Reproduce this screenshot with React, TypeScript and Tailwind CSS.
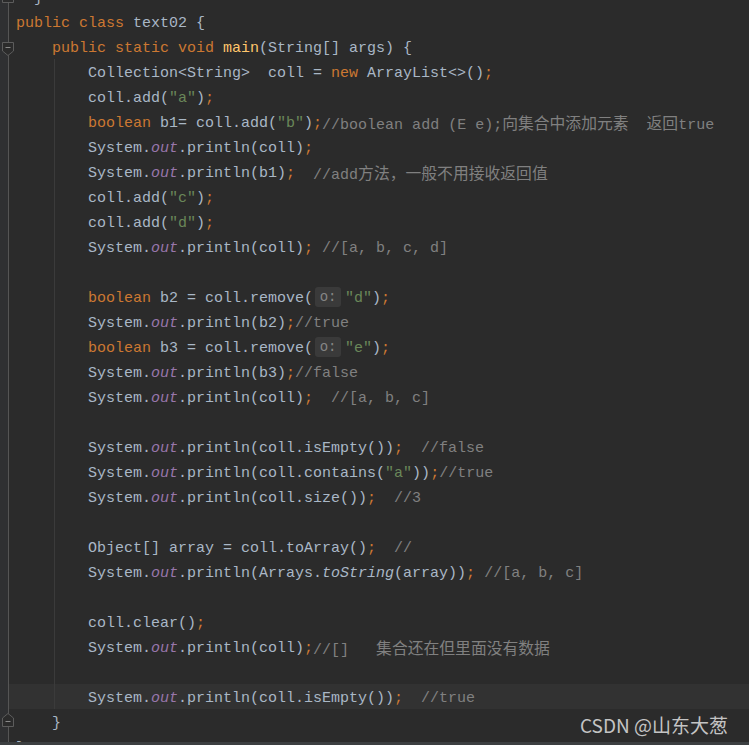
import type { ReactNode } from "react";

type Tok = [string, string];

const K = "text-[#cc7832]";
const T = "text-[#a9b7c6]";
const S = "text-[#6a8759]";
const C = "text-[#808080]";
const O = "text-[#9876aa] italic";
const M = "text-[#ffc66d]";
const I = "text-[#a9b7c6] italic";
const HINT = "hint";

const IND = "        ";

// System.out.<rest>
const sys = (rest: string, comment?: string): Tok[] => {
  const toks: Tok[] = [
    [IND + "System.", T],
    ["out", O],
    [".println(" + rest + ")", T],
    [";", K],
  ];
  if (comment) toks.push([comment, C]);
  return toks;
};

const lines: Tok[][] = [
  [["  }", T]],
  [["public class ", K], ["text02 {", T]],
  [["    public static void ", K], ["main", M], ["(String[] args) {", T]],
  [[IND + "Collection<String>  coll = ", T], ["new ", K], ["ArrayList<>()", T], [";", K]],
  [[IND + "coll.add(", T], ['"a"', S], [")", T], [";", K]],
  [
    [IND + "boolean ", K],
    ["b1= coll.add(", T],
    ['"b"', S],
    [")", T],
    [";", K],
    ["//boolean add (E e);向集合中添加元素  返回true", C],
  ],
  sys("coll"),
  sys("b1", "  //add方法，一般不用接收返回值"),
  [[IND + "coll.add(", T], ['"c"', S], [")", T], [";", K]],
  [[IND + "coll.add(", T], ['"d"', S], [")", T], [";", K]],
  sys("coll", " //[a, b, c, d]"),
  [],
  [[IND + "boolean ", K], ["b2 = coll.remove(", T], ["o:", HINT], ['"d"', S], [")", T], [";", K]],
  sys("b2", "//true"),
  [[IND + "boolean ", K], ["b3 = coll.remove(", T], ["o:", HINT], ['"e"', S], [")", T], [";", K]],
  sys("b3", "//false"),
  sys("coll", "  //[a, b, c]"),
  [],
  sys("coll.isEmpty()", "  //false"),
  [
    [IND + "System.", T],
    ["out", O],
    [".println(coll.contains(", T],
    ['"a"', S],
    ["))", T],
    [";", K],
    ["//true", C],
  ],
  sys("coll.size()", "  //3"),
  [],
  [[IND + "Object[] array = coll.toArray()", T], [";", K], ["  //", C]],
  [
    [IND + "System.", T],
    ["out", O],
    [".println(Arrays.", T],
    ["toString", I],
    ["(array))", T],
    [";", K],
    [" //[a, b, c]", C],
  ],
  [],
  [[IND + "coll.clear()", T], [";", K]],
  sys("coll", "//[]   集合还在但里面没有数据"),
  [],
  sys("coll.isEmpty()", "  //true"),
  [["    }", T]],
  [["}", T]],
];

function renderText(text: string, cls: string, key: number): ReactNode {
  const parts = text.split(/([\u3000-\u9fff\uff00-\uffef]+)/);
  return (
    <span key={key} className={cls}>
      {parts.map((p, i) =>
        i % 2 === 1 ? (
          <span key={i} className="font-['Noto_Sans_CJK_SC',sans-serif] text-[15.8px]">
            {p}
          </span>
        ) : (
          p
        )
      )}
    </span>
  );
}

function FoldMarker({ up }: { up?: boolean }) {
  return (
    <svg width="12" height="14" viewBox="0 0 12 14" className={up ? "rotate-180" : ""}>
      <path d="M0.5 0.5 H11.5 V9 L6 13.5 L0.5 9 Z" fill="#2b2b2b" stroke="#5c5c5c" />
      <path d="M3.5 5.5 H8.5" stroke="#8a8a8a" />
    </svg>
  );
}

export default function App() {
  return (
    <div className="w-[749px] h-[745px] bg-[#2b2b2b] overflow-hidden flex flex-col relative">
      <div className="flex flex-1 overflow-hidden relative">
        {/* gutter */}
        <div className="w-[9px] shrink-0 bg-[#2f3032] border-r border-[#555555]" />

        {/* code */}
        <div className="flex-1 relative font-['Liberation_Mono',monospace] text-[15px]">
          <div className="absolute left-[45px] top-[59px] h-[650px] w-px bg-[#3b3b3b]" />
          <div className="mt-[-16px] flex flex-col">
            {lines.map((toks, i) => (
              <div
                key={i}
                className={`h-[25px] shrink-0 flex items-center pl-[7px] pt-[5px] whitespace-pre ${
                  i === 28 ? "bg-[#323232]" : ""
                }`}
              >
                {toks.map(([text, cls], j) =>
                  cls === HINT ? (
                    <span
                      key={j}
                      className="relative -top-[2px] inline-flex items-center justify-center ml-[2px] mr-[4px] w-[26px] h-[20px] rounded-[3px] bg-[#3a3a3a] text-[#858585] text-[14px]"
                    >
                      {text}
                    </span>
                  ) : (
                    renderText(text, cls, j)
                  )
                )}
              </div>
            ))}
          </div>
        </div>

        {/* fold markers */}
        <div className="absolute left-[2px] top-[-11px]">
          <FoldMarker up />
        </div>
        <div className="absolute left-[2px] top-[42px]">
          <FoldMarker />
        </div>
        <div className="absolute left-[2px] top-[713px]">
          <FoldMarker up />
        </div>

        {/* watermark */}
        <div className="absolute left-[580px] top-[709px] leading-[32px] text-[19px] text-[#c4c4c4] font-['Noto_Sans_CJK_SC',sans-serif]">
          CSDN @山东大葱
        </div>
      </div>
      <div className="h-[3px] shrink-0 bg-[#3c3f41]" />
    </div>
  );
}
